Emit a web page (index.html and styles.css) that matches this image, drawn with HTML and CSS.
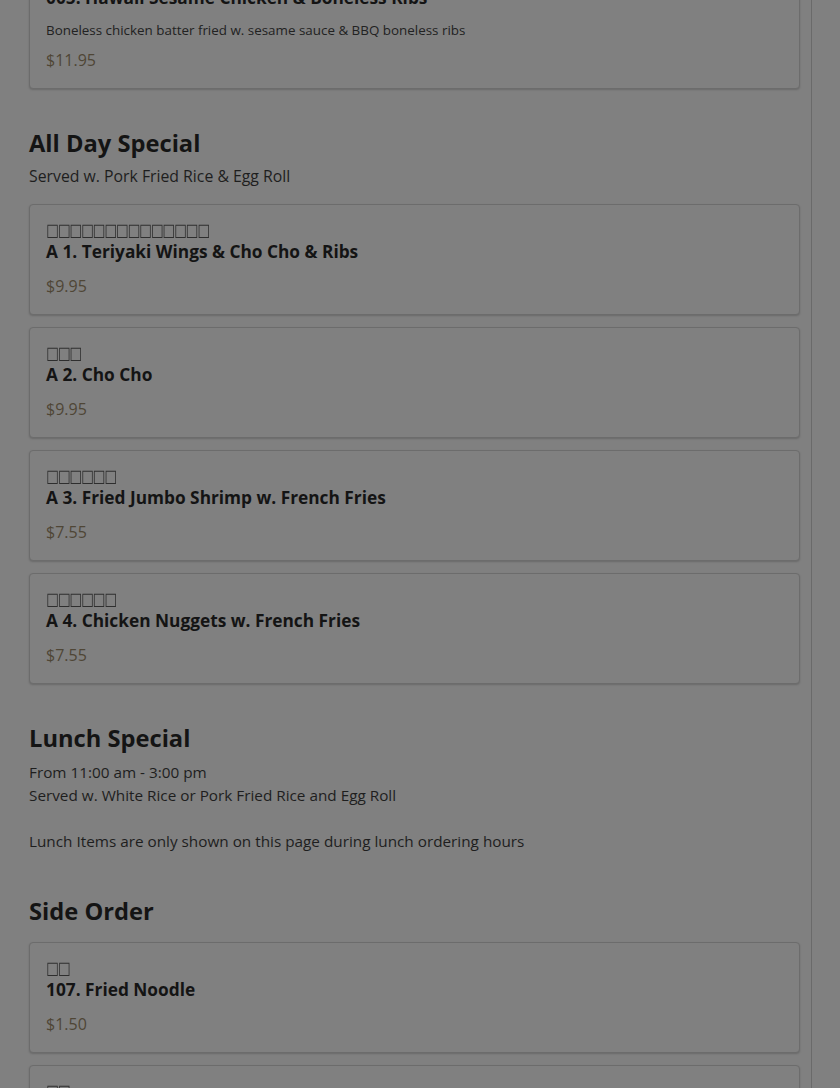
FILE: index.html
```html
<!DOCTYPE html>
<html lang="en">
<head>
<meta charset="utf-8">
<title>Menu</title>
<link rel="stylesheet" href="styles.css">
</head>
<body>
<div class="page">
  <main class="menu">
    <section class="section first">
      <div class="card">
        <div class="title">005. Hawaii Sesame Chicken &amp; Boneless Ribs</div>
        <div class="desc">Boneless chicken batter fried w. sesame sauce &amp; BBQ boneless ribs</div>
        <div class="price price-tight">$11.95</div>
      </div>
    </section>

    <section class="section">
      <h2 class="heading">All Day Special</h2>
      <div class="sub">Served w. Pork Fried Rice &amp; Egg Roll</div>
      <div class="cards">
        <div class="card">
          <div class="cn"><span>□□□□□□□□□□□□□□</span></div>
          <div class="title">A 1. Teriyaki Wings &amp; Cho Cho &amp; Ribs</div>
          <div class="price">$9.95</div>
        </div>
        <div class="card">
          <div class="cn"><span>□□□</span></div>
          <div class="title">A 2. Cho Cho</div>
          <div class="price">$9.95</div>
        </div>
        <div class="card">
          <div class="cn"><span>□□□□□□</span></div>
          <div class="title">A 3. Fried Jumbo Shrimp w. French Fries</div>
          <div class="price">$7.55</div>
        </div>
        <div class="card">
          <div class="cn"><span>□□□□□□</span></div>
          <div class="title">A 4. Chicken Nuggets w. French Fries</div>
          <div class="price">$7.55</div>
        </div>
      </div>
    </section>

    <section class="section">
      <h2 class="heading">Lunch Special</h2>
      <div class="info">
        <div>From 11:00 am - 3:00 pm</div>
        <div>Served w. White Rice or Pork Fried Rice and Egg Roll</div>
        <div class="blank"></div>
        <div>Lunch Items are only shown on this page during lunch ordering hours</div>
      </div>
    </section>

    <section class="section side">
      <h2 class="heading">Side Order</h2>
      <div class="cards">
        <div class="card">
          <div class="cn"><span>□□</span></div>
          <div class="title">107. Fried Noodle</div>
          <div class="price">$1.50</div>
        </div>
        <div class="card">
          <div class="cn"><span>□□</span></div>
          <div class="title">108. Egg Roll</div>
          <div class="price">$1.50</div>
        </div>
      </div>
    </section>
  </main>
  <aside class="rail"></aside>
</div>
</body>
</html>
```

FILE: styles.css
```css
html, body {
  margin: 0;
  padding: 0;
  background: #808080;
  height: 100%;
  overflow: hidden;
}

body {
  font-family: "Open Sans", "Lato", sans-serif;
  color: #141414;
}

.page {
  display: flex;
  height: 1088px;
  overflow: hidden;
}

.menu {
  width: 771px;
  padding: 0 11px 0 29px;
  flex: none;
  margin-top: -29px;
}

.rail {
  flex: 1;
  border-left: 1px solid #6a6a6a;
  background: #808080;
}

.section {
  margin-top: 38px;
}

.section.first {
  margin-top: 0;
}

.section.side {
  margin-top: 42px;
}

.heading {
  margin: 0;
  font-size: 23.7px;
  line-height: 32px;
  font-weight: 700;
  color: #141414;
}

.sub {
  margin-top: 6px;
  font-size: 15.8px;
  line-height: 22px;
  color: #1e1e1e;
  margin-bottom: 17px;
}

.side .heading {
  margin-bottom: 15px;
}

.info {
  margin-top: 7px;
  font-size: 15.3px;
  line-height: 23px;
  color: #1e1e1e;
}

.blank {
  height: 23px;
}

.cards {
  display: flex;
  flex-direction: column;
  gap: 12px;
}

.card {
  border: 1px solid #6c6c6c;
  border-radius: 4px;
  padding: 15px 16px 17px;
  box-shadow: 0 1px 2px rgba(0, 0, 0, 0.18);
  background: #808080;
}

.cn {
  font-family: "DejaVu Sans", sans-serif;
  font-size: 13.7px;
  line-height: 21px;
  height: 21px;
  color: #2e2e2e;
  letter-spacing: -1.3px;
}

.cn span {
  display: inline-block;
  transform: scaleY(1.3);
  transform-origin: 50% 60%;
  filter: grayscale(1);
}

.title {
  font-size: 17.3px;
  line-height: 22px;
  font-weight: 700;
  color: #141414;
}

.desc {
  margin-top: 12px;
  font-size: 13.4px;
  line-height: 18px;
  color: #222222;
}

.price {
  margin-top: 12px;
  font-size: 16px;
  line-height: 22px;
  color: #4f4636;
}

.price.price-tight {
  margin-top: 10px;
}
```
